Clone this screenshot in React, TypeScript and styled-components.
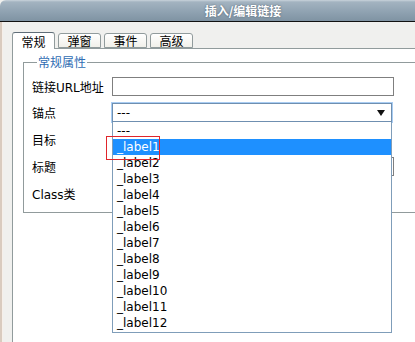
import React from 'react'
import styled, { createGlobalStyle } from 'styled-components'

const GlobalStyle = createGlobalStyle`
  html, body {
    margin: 0;
    padding: 0;
    background: #ffffff;
    overflow: hidden;
  }
  body {
    font-family: 'DejaVu Sans', 'Noto Sans CJK SC', sans-serif;
    font-size: 12px;
    color: #000;
  }
`

const Window = styled.div`
  width: 415px;
  height: 342px;
  display: flex;
  flex-direction: column;
  overflow: hidden;
  background: #f0f0ee;
`

const TitleBar = styled.div`
  height: 21px;
  flex-shrink: 0;
  border-top-left-radius: 6px;
  border-bottom: 1px solid #111;
  background: linear-gradient(#c9d3db 0px, #a3b3c0 2px, #8fa2b1 12px, #7f93a3 21px);
  color: #fff;
  font-family: 'Noto Sans CJK SC', sans-serif;
  font-weight: bold;
  font-size: 12px;
  line-height: 21px;
  text-align: center;
  padding-left: 71px;
  text-shadow: 0 0 2px #4a5c6a;
`

const Body = styled.div`
  flex: 1;
  display: flex;
  flex-direction: column;
  padding: 9px 0 0 10px;
  border-left: 2px solid #d9cbbf;
  box-shadow: inset 1px 0 0 #f6efe9;
`

const TabStrip = styled.div`
  display: flex;
  align-items: flex-end;
  gap: 3px;
  height: 17px;
  position: relative;
  z-index: 1;
`

const Tab = styled.div<{ $active?: boolean }>`
  width: 43px;
  height: ${p => (p.$active ? 17 : 15)}px;
  box-sizing: border-box;
  border: 1px solid #919b9c;
  border-bottom: ${p => (p.$active ? 'none' : '1px solid #919b9c')};
  border-top-color: ${p => (p.$active ? '#5f6d78' : '#919b9c')};
  border-radius: 3px 3px 0 0;
  background: ${p => (p.$active ? '#ffffff' : 'linear-gradient(#ffffff, #f1f0ea)')};
  font-family: 'Noto Sans CJK SC', sans-serif;
  font-size: 12px;
  line-height: ${p => (p.$active ? 17 : 14)}px;
  text-align: center;
  margin-bottom: ${p => (p.$active ? -1 : 0)}px;
`

const Panel = styled.div`
  flex: 1;
  background: #fff;
  border: 1px solid #919b9c;
  border-right: none;
  border-bottom: none;
  padding: 6px 0 0 10px;
`

const Fieldset = styled.fieldset`
  margin: 0 -30px 0 0;
  padding: 0 0 5px 8px;
  border: 1px solid #919b9c;
  min-width: 0;
`

const Legend = styled.legend`
  font-family: 'Noto Sans CJK SC', sans-serif;
  font-size: 12px;
  color: #2f6db3;
  padding: 0 1px;
  margin-left: 5px;
  line-height: 14px;
`

const FormGrid = styled.div`
  display: grid;
  grid-template-columns: 80px 1fr;
  grid-template-rows: 26px 27px 27px 27px 27px;
  align-items: center;
  margin-top: 4px;
`

const Label = styled.div`
  white-space: nowrap;
`

const TextBox = styled.div<{ $width?: number }>`
  width: ${p => p.$width ?? 282}px;
  height: 19px;
  box-sizing: border-box;
  border: 1px solid #7f7f7f;
  background: #fff;
`

const SelectWrap = styled.div`
  position: relative;
  width: 280px;
  height: 19px;
`

const SelectBox = styled.div`
  height: 19px;
  box-sizing: border-box;
  border: 1px solid #6f8fb0;
  box-shadow: 0 0 0 1px #a9cdf3;
  display: flex;
  align-items: center;
  justify-content: space-between;
  padding: 0 6px 0 4px;
  background: #fff;
`

const Arrow = styled.span`
  width: 0;
  height: 0;
  border-left: 4px solid transparent;
  border-right: 4px solid transparent;
  border-top: 6px solid #111;
`

const DropList = styled.div`
  position: absolute;
  top: 19px;
  left: 0;
  width: 280px;
  box-sizing: border-box;
  border: 1px solid #7f9db9;
  border-top: none;
  background: #fff;
  padding: 1px 0 1px;
  z-index: 2;
`

const Option = styled.div<{ $selected?: boolean }>`
  height: 16px;
  line-height: 16px;
  padding-left: 4px;
  background: ${p => (p.$selected ? '#1e90ff' : 'transparent')};
  color: ${p => (p.$selected ? '#fff' : '#000')};
`

const Marker = styled.div`
  position: absolute;
  left: -6px;
  top: 33px;
  width: 54px;
  height: 24px;
  box-sizing: border-box;
  border: 1px solid #e0252b;
  z-index: 3;
`

const options = ['---', ...Array.from({ length: 12 }, (_, i) => `_label${i + 1}`)]

export default function App() {
  return (
    <>
      <GlobalStyle />
      <Window>
        <TitleBar>插入/编辑链接</TitleBar>
        <Body>
          <TabStrip>
            <Tab $active>常规</Tab>
            <Tab>弹窗</Tab>
            <Tab>事件</Tab>
            <Tab>高级</Tab>
          </TabStrip>
          <Panel>
            <Fieldset>
              <Legend>常规属性</Legend>
              <FormGrid>
                <Label>链接URL地址</Label>
                <TextBox />
                <Label>锚点</Label>
                <SelectWrap>
                  <SelectBox>
                    <span>---</span>
                    <Arrow />
                  </SelectBox>
                  <DropList>
                    {options.map((o, i) => (
                      <Option key={o} $selected={i === 1}>
                        {o}
                      </Option>
                    ))}
                  </DropList>
                  <Marker />
                </SelectWrap>
                <Label>目标</Label>
                <TextBox $width={200} />
                <Label>标题</Label>
                <TextBox />
                <Label>Class类</Label>
                <TextBox $width={200} />
              </FormGrid>
            </Fieldset>
          </Panel>
        </Body>
      </Window>
    </>
  )
}
